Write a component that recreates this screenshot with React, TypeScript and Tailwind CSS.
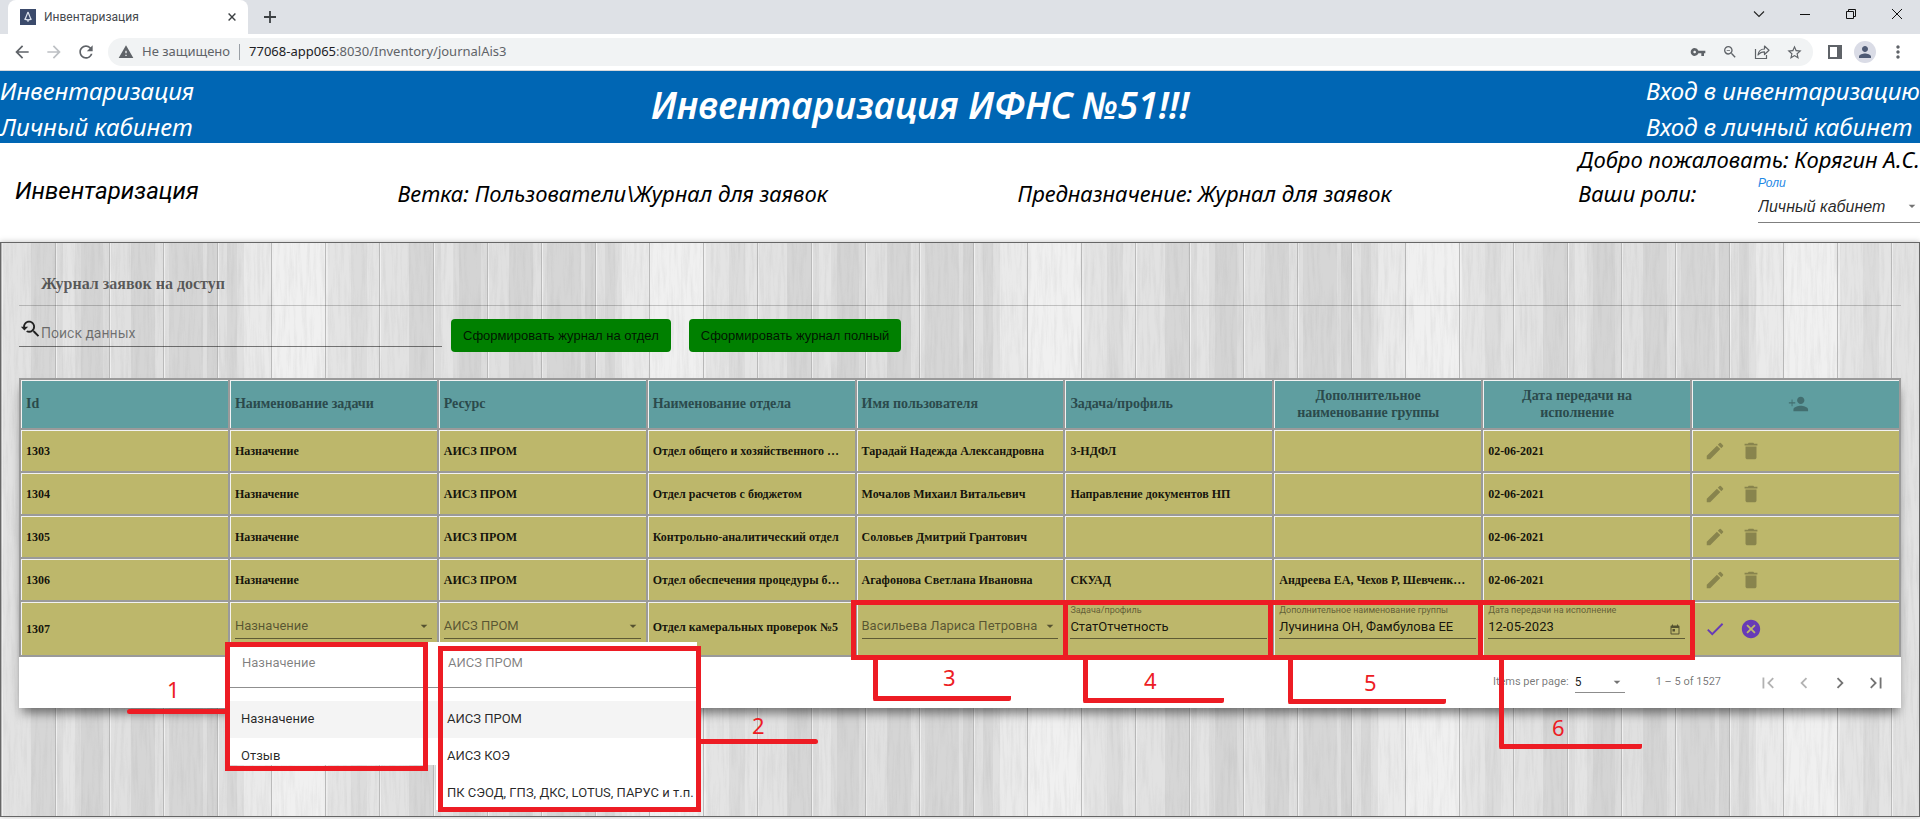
import type { ReactNode } from "react";
import {
  MdArrowBack,
  MdArrowForward,
  MdRefresh,
  MdWarning,
  MdVpnKey,
  MdZoomOut,
  MdStarBorder,
  MdMoreVert,
  MdPerson,
  MdEdit,
  MdDelete,
  MdCheck,
  MdCancel,
  MdToday,
  MdFirstPage,
  MdChevronLeft,
  MdChevronRight,
  MdLastPage,
  MdYoutubeSearchedFor,
  MdArrowDropDown,
} from "react-icons/md";

const columns = [
  "Id",
  "Наименование задачи",
  "Ресурс",
  "Наименование отдела",
  "Имя пользователя",
  "Задача/профиль",
  "Дополнительное наименование группы",
  "Дата передачи на исполнение",
];

const rows = [
  ["1303", "Назначение", "АИСЗ ПРОМ", "Отдел общего и хозяйственного …", "Тарадай Надежда Александровна", "3-НДФЛ", "", "02-06-2021"],
  ["1304", "Назначение", "АИСЗ ПРОМ", "Отдел расчетов с бюджетом", "Мочалов Михаил Витальевич", "Направление документов НП", "", "02-06-2021"],
  ["1305", "Назначение", "АИСЗ ПРОМ", "Контрольно-аналитический отдел", "Соловьев Дмитрий Грантович", "", "", "02-06-2021"],
  ["1306", "Назначение", "АИСЗ ПРОМ", "Отдел обеспечения процедуры б…", "Агафонова Светлана Ивановна", "СКУАД", "Андреева ЕА, Чехов Р, Шевченк…", "02-06-2021"],
];

const ui = "font-['Roboto','Liberation_Sans',sans-serif]";
const arial = "font-['Liberation_Sans',sans-serif]";
const serif = "font-['Liberation_Serif',serif]";
const segoe = "font-['Noto_Sans','Open_Sans',sans-serif]";
const cell = "border-l-2 border-t-2 border-[#9a9a9a] shadow-[inset_1px_1px_0_#f2f2f2] pl-[5px] whitespace-nowrap";

function TabStrip() {
  return (
    <div className="flex h-[34px] items-stretch bg-[#dee1e6] pl-2">
      <div className="flex w-60 items-center rounded-t-lg bg-white pl-3 pr-2">
        <svg viewBox="0 0 16 16" className="size-4 shrink-0">
          <rect width="16" height="16" fill="#3b4a6b" />
          <path d="M8 3 L11.200 11 M8 3 L4.800 11 M4.600 9.500 Q8 12.500 11.400 9.500" fill="none" stroke="#dfe5f0" strokeWidth="1.2" />
          <path d="M8 10.500v2.500" stroke="#dfe5f0" strokeWidth="1" />
        </svg>
        <span className="ml-2 flex-1 text-xs text-[#45494d]">Инвентаризация</span>
        <button aria-label="Закрыть вкладку" className="p-1">
          <svg viewBox="0 0 8 8" className="size-2">
            <path d="M.6 .6 7.4 7.4M7.4 .6 .6 7.4" stroke="#3c4043" strokeWidth="1.4" />
          </svg>
        </button>
      </div>
      <button aria-label="Новая вкладка" className="ml-4">
        <svg viewBox="0 0 12 12" className="size-3">
          <path d="M6 0v12M0 6h12" stroke="#3c4043" strokeWidth="1.8" />
        </svg>
      </button>
      <div className="ml-auto flex items-center gap-[34px] pr-[17px] pb-1.5">
        <button aria-label="Поиск вкладок">
          <svg viewBox="0 0 12 12" className="size-3"><path d="M1 3.5 6 8.5 11 3.5" fill="none" stroke="#222" strokeWidth="1.1" /></svg>
        </button>
        <button aria-label="Свернуть">
          <svg viewBox="0 0 12 12" className="size-3"><path d="M1 6.5h10" stroke="#111" /></svg>
        </button>
        <button aria-label="Развернуть">
          <svg viewBox="0 0 12 12" className="size-3">
            <path d="M1.5 3.5h7v7h-7zM3.5 3.5v-2h7v7h-2" fill="none" stroke="#111" />
          </svg>
        </button>
        <button aria-label="Закрыть">
          <svg viewBox="0 0 12 12" className="size-3"><path d="M1 1 11 11M11 1 1 11" stroke="#111" /></svg>
        </button>
      </div>
    </div>
  );
}

function Toolbar() {
  return (
    <div className="flex h-[37px] items-center border-b border-[#d5d8dc] bg-white px-3 text-[#5f6368]">
      <button aria-label="Назад" className="mr-3"><MdArrowBack className="size-5" /></button>
      <button aria-label="Вперёд" className="mr-3 text-[#bdc0c4]"><MdArrowForward className="size-5" /></button>
      <button aria-label="Обновить" className="mr-3"><MdRefresh className="size-5" /></button>
      <div className={`flex h-7 flex-1 items-center rounded-full bg-[#f1f3f4] px-2.5 text-[13px] ${segoe}`}>
        <MdWarning className="mr-2 size-4" />
        <span>Не защищено</span>
        <span className="mx-[9px] h-4 w-px bg-[#9aa0a6]" />
        <span>
          <span className="text-[#202124]">77068-app065</span>:8030/Inventory/journalAis3
        </span>
        <div className="ml-auto flex items-center gap-4">
          <MdVpnKey className="size-4" />
          <MdZoomOut className="size-4" />
          <svg viewBox="0 0 16 16" className="size-4">
            <path d="M1.5 5v9.500h11V11" fill="none" stroke="currentColor" strokeWidth="1.2" />
            <path d="M4 11c.5-4 3-6 6.500-6V2L15 6.200 10.500 10.500V7.800C8 7.800 5.800 8.600 4 11Z" fill="none" stroke="currentColor" strokeWidth="1.2" strokeLinejoin="round" />
          </svg>
          <MdStarBorder className="size-[17px]" />
        </div>
      </div>
      <div className="ml-[15px] flex items-center gap-3">
        <svg viewBox="0 0 14 14" className="size-3.5">
          <path d="M1 1h12v12H1z" fill="none" stroke="currentColor" strokeWidth="2" />
          <path d="M9 1h4v12H9z" fill="currentColor" />
        </svg>
        <span className="flex size-[22px] items-center justify-center rounded-full bg-[#dadce6] text-[#4f5b75]">
          <MdPerson className="size-4.5" />
        </span>
        <button aria-label="Меню"><MdMoreVert className="size-5" /></button>
      </div>
    </div>
  );
}

const planks = ["#e2e2e2", "#dcdcdc", "#e0e0e0", "#dfdfdf", "#e0e0e0", "#e9e9e9", "#e4e4e4"];
const bands = [
  { x: 30, w: 24, fill: "#c4c4c4" },
  { x: 62, w: 12, fill: "#f0f0f0" },
  { x: 80, w: 22, fill: "#c8c8c8" },
  { x: 130, w: 24, fill: "#c6c6c6" },
  { x: 168, w: 34, fill: "#c9c9c9" },
  { x: 206, w: 10, fill: "#c4c4c4" },
  { x: 226, w: 10, fill: "#cacaca" },
  { x: 243, w: 84, fill: "#fbfbfb" },
  { x: 350, w: 16, fill: "#d0d0d0" },
];

function Wood() {
  return (
    <svg className="absolute inset-0 size-full" aria-hidden="true">
      <defs>
        <pattern id="planks" width="378" height="800" patternUnits="userSpaceOnUse">
          {planks.map((tone, i) => (
            <rect key={i} x={i * 54} width="54" height="800" fill={tone} />
          ))}
          {bands.map((b) => (
            <rect key={b.x} x={b.x} width={b.w} height="800" fill={b.fill} opacity="0.4" />
          ))}
          {planks.map((_, i) => (
            <g key={i}>
              <rect x={i * 54} width="1" height="800" fill="#bababa" />
              <rect x={i * 54 + 1} width="1" height="800" fill="#f0f0f0" />
            </g>
          ))}
        </pattern>
        <filter id="grain" x="0" y="0" width="100%" height="100%">
          <feTurbulence type="fractalNoise" baseFrequency="0.3 0.02" numOctaves="5" seed="7" />
          <feColorMatrix values="0 0 0 0 0.3  0 0 0 0 0.3  0 0 0 0 0.3  1.2 0 0 0 -0.5" />
        </filter>
      </defs>
      <rect width="100%" height="100%" fill="url(#planks)" />
      <rect width="100%" height="100%" filter="url(#grain)" opacity="0.24" />
    </svg>
  );
}

function PersonAddIcon() {
  return (
    <svg viewBox="0 0 24 24" className="mx-auto size-[22px]" fill="currentColor" aria-hidden="true">
      <path d="M15 12c2.210 0 4-1.790 4-4s-1.790-4-4-4-4 1.790-4 4 1.790 4 4 4zm-9-2V7H5v3H2v1.500h3v3h1v-3h3V10H6zm9 4c-2.670 0-8 1.340-8 4v2h16v-2c0-2.660-5.330-4-8-4z" />
    </svg>
  );
}

function SelectField({ label, value }: { label: string; value: string }) {
  return (
    <div className={`relative mr-[5px] mb-1 border-b border-black/50 ${ui}`}>
      <select aria-label={label} className="block h-6 w-full appearance-none bg-transparent text-[13px] font-normal text-black/55">
        <option>{value}</option>
      </select>
      <MdArrowDropDown className="pointer-events-none absolute right-0 top-1 size-4 text-black/55" />
    </div>
  );
}

function TextField({ id, label, value, icon }: { id: string; label: string; value: string; icon?: ReactNode }) {
  return (
    <div className={`relative mr-[5px] mb-1 border-b border-black/50 ${ui}`}>
      <label htmlFor={id} className="absolute -top-2.5 left-0 text-[9px] leading-3 font-normal text-black/50">
        {label}
      </label>
      <input id={id} defaultValue={value} className="block h-6 w-full bg-transparent text-[13px] font-normal text-black/90" />
      {icon}
    </div>
  );
}

function Popup({ value, options, place }: { value: string; options: string[]; place: string }) {
  return (
    <div className={`absolute overflow-hidden bg-white text-[13px] ${ui} ${place}`}>
      <input
        aria-label="Поиск значения"
        defaultValue={value}
        className="block h-[46px] w-full border-b border-[#8f8f8f] pb-1 pl-3 text-black/50"
      />
      <ul role="listbox" aria-label="Значения" className="pt-[13px] text-black/85">
        {options.map((o, i) => (
          <li
            key={o}
            role="option"
            aria-selected={i === 0}
            className={`h-[37px] whitespace-nowrap pl-[11px] leading-9 ${i === 0 ? "bg-[#f4f4f4]" : ""}`}
          >
            {o}
          </li>
        ))}
      </ul>
    </div>
  );
}

const red = "absolute border-[#ed1c24]";
const digit = `absolute text-[22px] leading-6 text-[#ed1c24] ${segoe}`;

function Annotations() {
  return (
    <div className="pointer-events-none absolute left-0 top-0">
      <div className={`${red} left-[224px] top-[399px] h-[129px] w-[203px] border-5`} />
      <div className={`${red} left-[437px] top-[403px] h-[166px] w-[263px] border-5`} />
      <div className={`${red} left-[850px] top-[357px] h-[60px] w-[217px] border-5`} />
      <div className={`${red} left-[1062px] top-[357px] h-[60px] w-[210px] border-5`} />
      <div className={`${red} left-[1267px] top-[357px] h-[60px] w-[215px] border-5`} />
      <div className={`${red} left-[1477px] top-[357px] h-[60px] w-[217px] border-5`} />

      <div className={`${red} left-[126px] top-[466px] w-[98px] rounded-l-sm border-t-5`} />
      <div className={`${red} left-[700px] top-[496px] w-[117px] rounded-r-sm border-t-5`} />
      <div className={`${red} left-[872px] top-[417px] h-[41px] w-[138px] rounded-b-xs border-b-5 border-l-5`} />
      <div className={`${red} left-[1082px] top-[417px] h-[43px] w-[141px] rounded-b-xs border-b-5 border-l-5`} />
      <div className={`${red} left-[1287px] top-[417px] h-[44px] w-[158px] rounded-b-xs border-b-5 border-l-5`} />
      <div className={`${red} left-[1498px] top-[417px] h-[89px] w-[143px] rounded-b-xs border-b-5 border-l-5`} />

      <span className={`${digit} left-[166px] top-[434px]`}>1</span>
      <span className={`${digit} left-[751px] top-[470px]`}>2</span>
      <span className={`${digit} left-[942px] top-[422px]`}>3</span>
      <span className={`${digit} left-[1143px] top-[425px]`}>4</span>
      <span className={`${digit} left-[1363px] top-[427px]`}>5</span>
      <span className={`${digit} left-[1551px] top-[472px]`}>6</span>
    </div>
  );
}

function JournalTable() {
  return (
    <table className={`w-full table-fixed border-separate border-spacing-0 border-b-2 border-r-2 border-[#9a9a9a] font-bold ${serif}`}>
      <thead>
        <tr className="h-[50px] bg-[#5f9ea0] text-sm text-[#2b4a4c]">
          {columns.map((c, i) => (
            <th key={c} className={`${cell} ${i > 5 ? "pr-6 text-center leading-[17px]" : "text-left"}`}>
              <span className={i > 5 ? "mx-auto block w-40 whitespace-normal" : ""}>{c}</span>
            </th>
          ))}
          <th className={cell}>
            <button aria-label="Добавить" className="block w-full text-black/30"><PersonAddIcon /></button>
          </th>
        </tr>
      </thead>
      <tbody className="bg-[#bdb76b] text-xs text-black/90">
        {rows.map((r) => (
          <tr key={r[0]} className="h-[43px]">
            {r.map((v, i) => (
              <td key={i} className={cell}>{v}</td>
            ))}
            <td className={cell}>
              <div className="flex gap-3.5 pl-[7px] text-black/28">
                <button aria-label="Изменить"><MdEdit className="size-[22px]" /></button>
                <button aria-label="Удалить"><MdDelete className="size-[22px]" /></button>
              </div>
            </td>
          </tr>
        ))}
        <tr className="h-[55px]">
          <td className={cell}>1307</td>
          <td className={cell}><SelectField label="Наименование задачи" value="Назначение" /></td>
          <td className={cell}><SelectField label="Ресурс" value="АИСЗ ПРОМ" /></td>
          <td className={`${cell} pb-1`}>Отдел камеральных проверок №5</td>
          <td className={cell}><SelectField label="Имя пользователя" value="Васильева Лариса Петровна" /></td>
          <td className={cell}><TextField id="task" label="Задача/профиль" value="СтатОтчетность" /></td>
          <td className={cell}><TextField id="group" label="Дополнительное наименование группы" value="Лучинина ОН, Фамбулова ЕЕ" /></td>
          <td className={cell}>
            <TextField
              id="date"
              label="Дата передачи на исполнение"
              value="12-05-2023"
              icon={<MdToday className="absolute bottom-0.5 right-1 size-3 text-black/55" />}
            />
          </td>
          <td className={cell}>
            <div className="flex gap-3.5 pl-[7px] text-[#673ab7]">
              <button aria-label="Сохранить"><MdCheck className="size-[22px]" /></button>
              <button aria-label="Отменить"><MdCancel className="size-[22px]" /></button>
            </div>
          </td>
        </tr>
      </tbody>
    </table>
  );
}

export default function App() {
  return (
    <div className={`flex min-h-screen flex-col bg-white ${ui}`}>
      <TabStrip />
      <Toolbar />

      <header className={`flex items-center justify-between bg-[#0066b4] text-2xl italic leading-9 text-white ${segoe}`}>
        <nav className="-mb-0.5 flex flex-col pt-0.5">
          <a href="#inventory">Инвентаризация</a>
          <a href="#cabinet">Личный кабинет</a>
        </nav>
        <h1 className="pb-1 text-[37px] font-semibold">Инвентаризация ИФНС №51!!!</h1>
        <nav className="-mb-0.5 flex flex-col pt-0.5">
          <a href="#login-inventory">Вход в инвентаризацию</a>
          <a href="#login-cabinet">Вход в личный кабинет</a>
        </nav>
      </header>

      <section className={`grid h-[99px] grid-cols-[20.7%_32.3%_29.2%_1fr] text-[22px] italic leading-8 text-black ${segoe}`}>
        <span className={`pl-[15px] pt-8 text-2xl ${ui}`}>Инвентаризация</span>
        <span className="pt-[34px]">Ветка: Пользователи\Журнал для заявок</span>
        <span className="pt-[34px]">Предназначение: Журнал для заявок</span>
        <div className="whitespace-nowrap">
          <div>Добро пожаловать: Корягин А.С.</div>
          <div className="flex justify-between">
            <span className="pt-0.5">Ваши роли:</span>
            <div className={`relative w-[162px] border-b border-black/50 ${arial}`}>
              <label htmlFor="roles" className="block text-xs leading-4 text-[#1e88e5]">Роли</label>
              <select id="roles" className="block h-[31px] w-full appearance-none bg-transparent text-base italic text-black/85">
                <option>Личный кабинет</option>
              </select>
              <MdArrowDropDown className="pointer-events-none absolute right-0 top-[23px] size-4 text-black/55" />
            </div>
          </div>
        </div>
      </section>

      <main className="relative mb-0.5 flex-1 border border-[#666] px-[18px] shadow-[0_0_6px_rgba(0,0,0,0.25)]">
        <Wood />
        <div className="relative">
          <h2 className={`h-[63px] border-b border-black/20 pl-[22px] pt-[31px] text-base leading-5 font-bold text-black/60 ${serif}`}>
            Журнал заявок на доступ
          </h2>
          <div className="flex h-[72px] items-start pt-[13px]">
            <label className="flex h-7 w-[423px] items-center border-b border-black/50">
              <MdYoutubeSearchedFor className="mb-2 size-[22px] text-black/85" />
              <input aria-label="Поиск данных" placeholder="Поиск данных" className="min-w-0 flex-1 bg-transparent text-sm placeholder:text-black/50" />
            </label>
            <button className={`ml-[9px] h-[33px] rounded bg-[#008000] px-3 text-[13px] text-black/85 ${arial}`}>Сформировать журнал на отдел</button>
            <button className={`ml-[18px] h-[33px] rounded bg-[#008000] px-3 text-[13px] text-black/85 ${arial}`}>Сформировать журнал полный</button>
          </div>
          <div className="shadow-[0_8px_10px_-3px_rgba(0,0,0,0.5)]">
            <JournalTable />
            <div className="flex h-[51px] items-center justify-end bg-white pr-3.5 text-[11px] text-black/55">
              <label htmlFor="page-size">Items per page:</label>
              <div className="relative ml-1.5 w-[50px] border-b border-black/45">
                <select id="page-size" className="block h-5 w-full appearance-none bg-transparent text-xs text-black/90">
                  <option>5</option>
                </select>
                <MdArrowDropDown className="pointer-events-none absolute right-0 top-0.5 size-4" />
              </div>
              <span className="ml-[31px] mr-9">1 – 5 of 1527</span>
              <div className="flex gap-3.5">
                <button aria-label="Первая" className="text-black/30"><MdFirstPage className="size-[22px]" /></button>
                <button aria-label="Предыдущая" className="text-black/30"><MdChevronLeft className="size-[22px]" /></button>
                <button aria-label="Следующая"><MdChevronRight className="size-[22px]" /></button>
                <button aria-label="Последняя"><MdLastPage className="size-[22px]" /></button>
              </div>
            </div>
          </div>
        </div>
        <Popup value="Назначение" options={["Назначение", "Отзыв"]} place="left-[229px] top-[399px] h-[123px] w-[206px]" />
        <Popup
          value="АИСЗ ПРОМ"
          options={["АИСЗ ПРОМ", "АИСЗ КОЭ", "ПК СЭОД, ГПЗ, ДКС, LOTUS, ПАРУС и т.п."]}
          place="left-[435px] top-[399px] h-[168px] w-[261px]"
        />
        <Annotations />
      </main>
    </div>
  );
}
